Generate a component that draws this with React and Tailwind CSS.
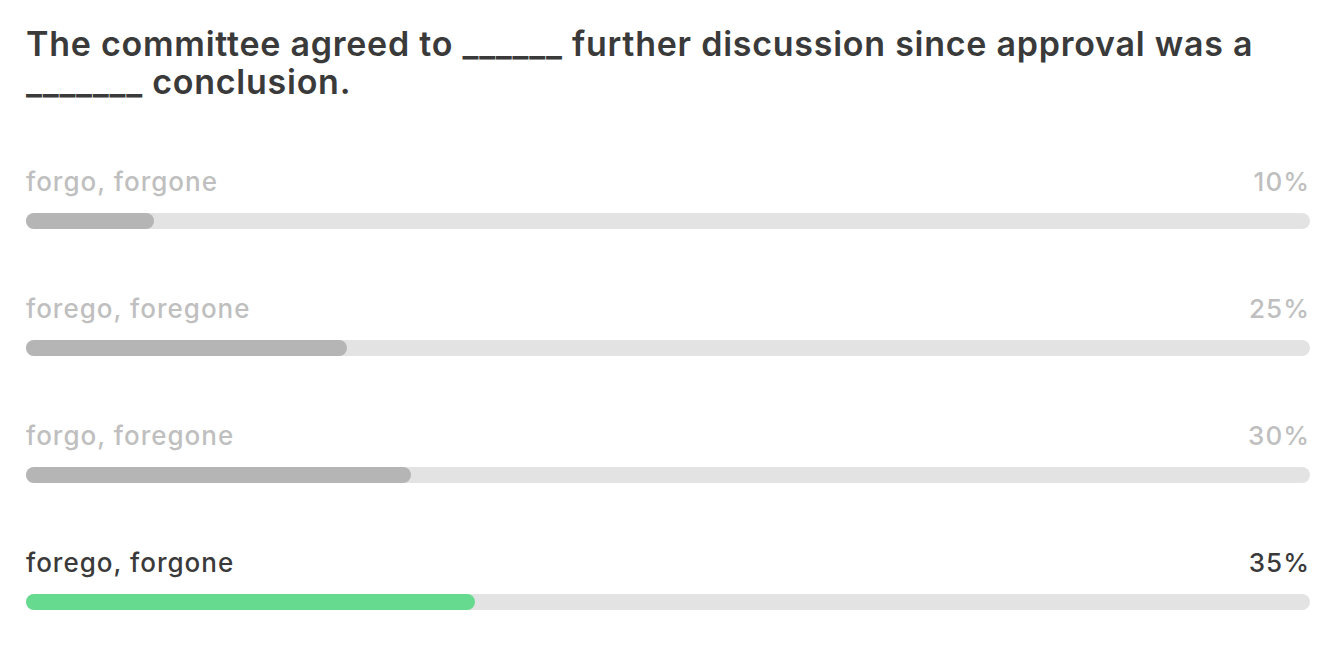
import React from "react";

const options = [
    { label: "forgo, forgone", pct: 10, correct: false },
    { label: "forego, foregone", pct: 25, correct: false },
    { label: "forgo, foregone", pct: 30, correct: false },
    { label: "forego, forgone", pct: 35, correct: true },
];

const App = () => {
    return (
        <div className="min-h-screen bg-white pl-[26px] pr-[22px] pt-[25px]" style={{ fontFamily: "Inter, 'Noto Sans', sans-serif" }}>
            <h1 className="text-[34px] leading-[38px] font-semibold text-[#3a3a3a] tracking-[0.75px]">
                The committee agreed to ______ further discussion since approval was a _______ conclusion.
            </h1>

            <div className="mt-[65px] flex flex-col gap-[64px]">
                {options.map((opt, i) => (
                    <div key={i}>
                        <div className={`flex justify-between text-[26px] leading-[32px] font-medium tracking-[1px] ${opt.correct ? "text-[#3a3a3a]" : "text-[#bfbfbf]"}`}>
                            <span>{opt.label}</span>
                            <span>{opt.pct}%</span>
                        </div>
                        <div className="mt-[15px] h-4 rounded-full bg-[#e3e3e3]">
                            <div
                                className={`h-4 rounded-full ${opt.correct ? "bg-[#66db8f]" : "bg-[#b5b5b5]"}`}
                                style={{ width: `${opt.pct}%` }}
                            />
                        </div>
                    </div>
                ))}
            </div>
        </div>
    );
};

export default App;
